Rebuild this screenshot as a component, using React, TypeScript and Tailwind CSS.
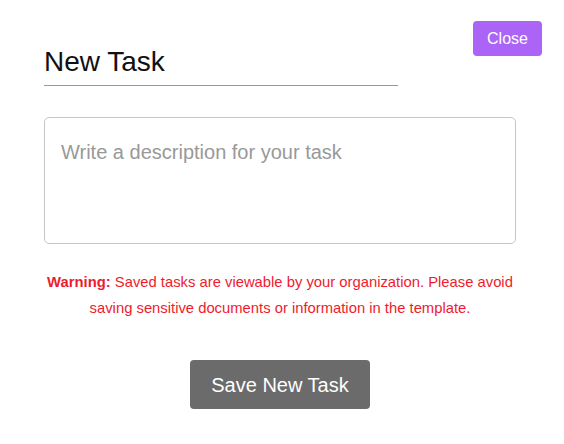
import React from "react";

export default function App() {
  return (
    <div className="relative w-full h-[444px] bg-white" style={{ fontFamily: '"Liberation Sans", Arial, sans-serif' }}>
      <button className="absolute top-[21px] right-[22px] w-[69px] h-[35px] rounded-[4px] bg-[#ab64f6] text-white text-[16px] leading-none">
        Close
      </button>
      <div className="px-[44px] pt-[45px]">
        <div className="w-[354px] border-b border-[#999999] pb-[7px] text-[28px] leading-[33px] text-[#111111]">
          New Task
        </div>
        <textarea
          className="block mt-[31px] w-[472px] h-[127px] resize-none rounded-[5px] border border-[#c6c6c6] px-4 pt-[22px] pb-[14px] text-[20px] leading-[24px] text-[#333] placeholder:text-[#999999] outline-none"
          placeholder="Write a description for your task"
        />
        <p className="mt-[25px] -ml-[6px] w-[484px] text-center text-[14.8px] leading-[26px] text-[#ee1b2d]">
          <span className="font-bold">Warning:</span> Saved tasks are viewable by your organization. Please avoid saving sensitive documents or information in the template.
        </p>
        <div className="mt-[39px] flex w-[472px] justify-center">
          <button className="h-[49px] rounded-[4px] bg-[#6b6b6b] px-[21px] text-[20px] leading-none text-white">
            Save New Task
          </button>
        </div>
      </div>
    </div>
  );
}
